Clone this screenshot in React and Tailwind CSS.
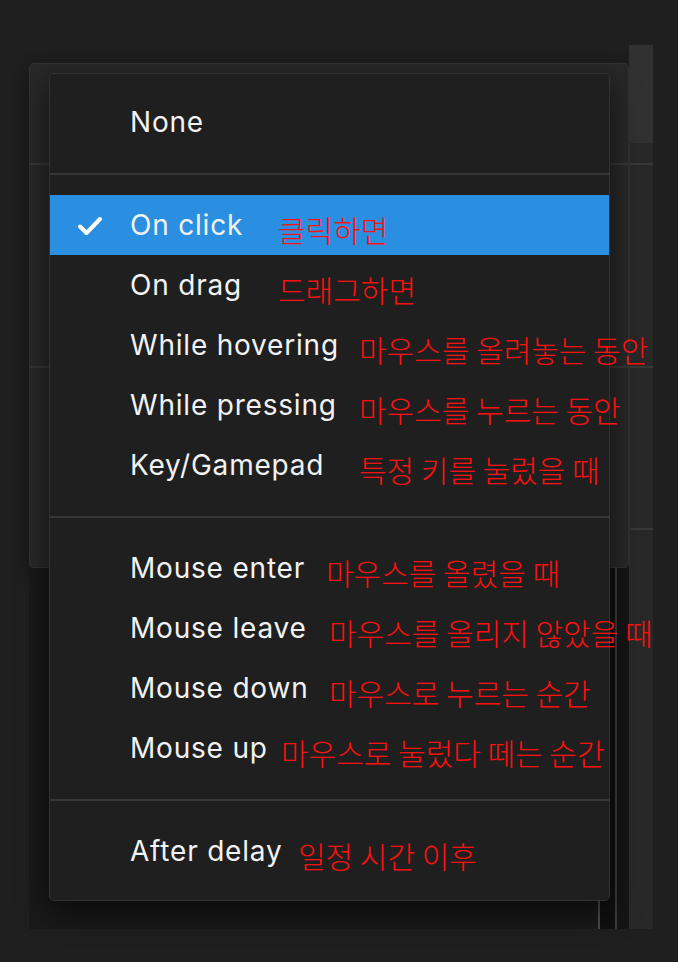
import React from "react";

const sections = [
  [{ label: "None", note: "", w: "" }],
  [
    { label: "On click", note: "클릭하면", w: "w-[148px]", checked: true },
    { label: "On drag", note: "드래그하면", w: "w-[148px]" },
    { label: "While hovering", note: "마우스를 올려놓는 동안", w: "w-[229px]" },
    { label: "While pressing", note: "마우스를 누르는 동안", w: "w-[229px]" },
    { label: "Key/Gamepad", note: "특정 키를 눌렀을 때", w: "w-[229px]" },
  ],
  [
    { label: "Mouse enter", note: "마우스를 올렸을 때", w: "w-[196px]" },
    { label: "Mouse leave", note: "마우스를 올리지 않았을 때", w: "w-[199px]" },
    { label: "Mouse down", note: "마우스로 누르는 순간", w: "w-[199px]" },
    { label: "Mouse up", note: "마우스로 눌렀다 떼는 순간", w: "w-[151px]" },
  ],
  [{ label: "After delay", note: "일정 시간 이후", w: "w-[168px]" }],
];

function Check() {
  return (
    <svg width="26" height="22" viewBox="0 0 26 22" fill="none">
      <path d="M3 11.5 L9.5 18 L23 4" stroke="#ffffff" strokeWidth="4" strokeLinecap="round" strokeLinejoin="round" />
    </svg>
  );
}

function Row({ item }) {
  return (
    <div
      className={
        "flex h-[60px] items-center whitespace-nowrap " +
        (item.checked ? "bg-[#2a8fe1]" : "")
      }
    >
      <div className="flex w-[80px] shrink-0 items-center justify-center pt-[1px]">
        {item.checked ? <Check /> : null}
      </div>
      <span
        className={
          item.w +
          " shrink-0 font-['Inter',sans-serif] text-[28px] leading-none tracking-[0.8px] text-[#f2f2f2]"
        }
      >
        {item.label}
      </span>
      {item.note ? (
        <span className="pt-[7px] font-['Noto_Sans_CJK_KR','Noto_Sans',sans-serif] text-[30px] font-light leading-none text-[#ff1010]">
          {item.note}
        </span>
      ) : null}
    </div>
  );
}

export default function App() {
  return (
    <div className="relative h-[962px] w-[678px] overflow-hidden bg-[#1f1f1f]">
      <div className="flex items-start pl-[29px] pt-[45px]">
        {/* background dialog column */}
        <div className="mt-[18px] flex w-[600px] flex-col">
          <div className="flex h-[505px] flex-col rounded-[5px] border border-[#333333] bg-[#282828] shadow-[0_6px_16px_rgba(0,0,0,0.35)]">
            <div className="h-[99px]" />
            <div className="h-[2px] bg-[#363636]" />
            <div className="h-[201px]" />
            <div className="h-[2px] bg-[#363636]" />
          </div>
          <div className="flex h-[361px] justify-end bg-[#191919]">
            <div className="w-[2px] bg-[#4a4a4a]" />
            <div className="w-[15px] bg-[#101010]" />
            <div className="w-[2px] bg-[#3c3c3c]" />
            <div className="w-[12px] bg-[#151515]" />
          </div>
        </div>
        {/* right strip */}
        <div className="flex h-[884px] w-[24px] flex-col border-l border-[#2f2f2f] bg-[#282828]">
          <div className="h-[98px] bg-[#313131]" />
          <div className="h-[20px]" />
          <div className="h-[2px] bg-[#383838]" />
          <div className="h-[201px]" />
          <div className="h-[2px] bg-[#383838]" />
          <div className="h-[160px]" />
          <div className="h-[2px] bg-[#383838]" />
        </div>
      </div>

      {/* dropdown menu overlay */}
      <div className="absolute left-[49px] top-[73px] w-[561px] rounded-[5px] border border-[#323232] bg-[#1f1f1f] shadow-[0_10px_30px_rgba(0,0,0,0.6)]">
        {sections.map((sec, i) => (
          <React.Fragment key={i}>
            {i > 0 ? <div className="h-[2px] bg-[#373737]" /> : null}
            <div className={(i === 0 ? "pt-[18px]" : "pt-[20px]") + " " + (i === sections.length - 1 ? "pb-[19px]" : "pb-[21px]")}>
              {sec.map((item) => (
                <Row key={item.label} item={item} />
              ))}
            </div>
          </React.Fragment>
        ))}
      </div>
    </div>
  );
}
